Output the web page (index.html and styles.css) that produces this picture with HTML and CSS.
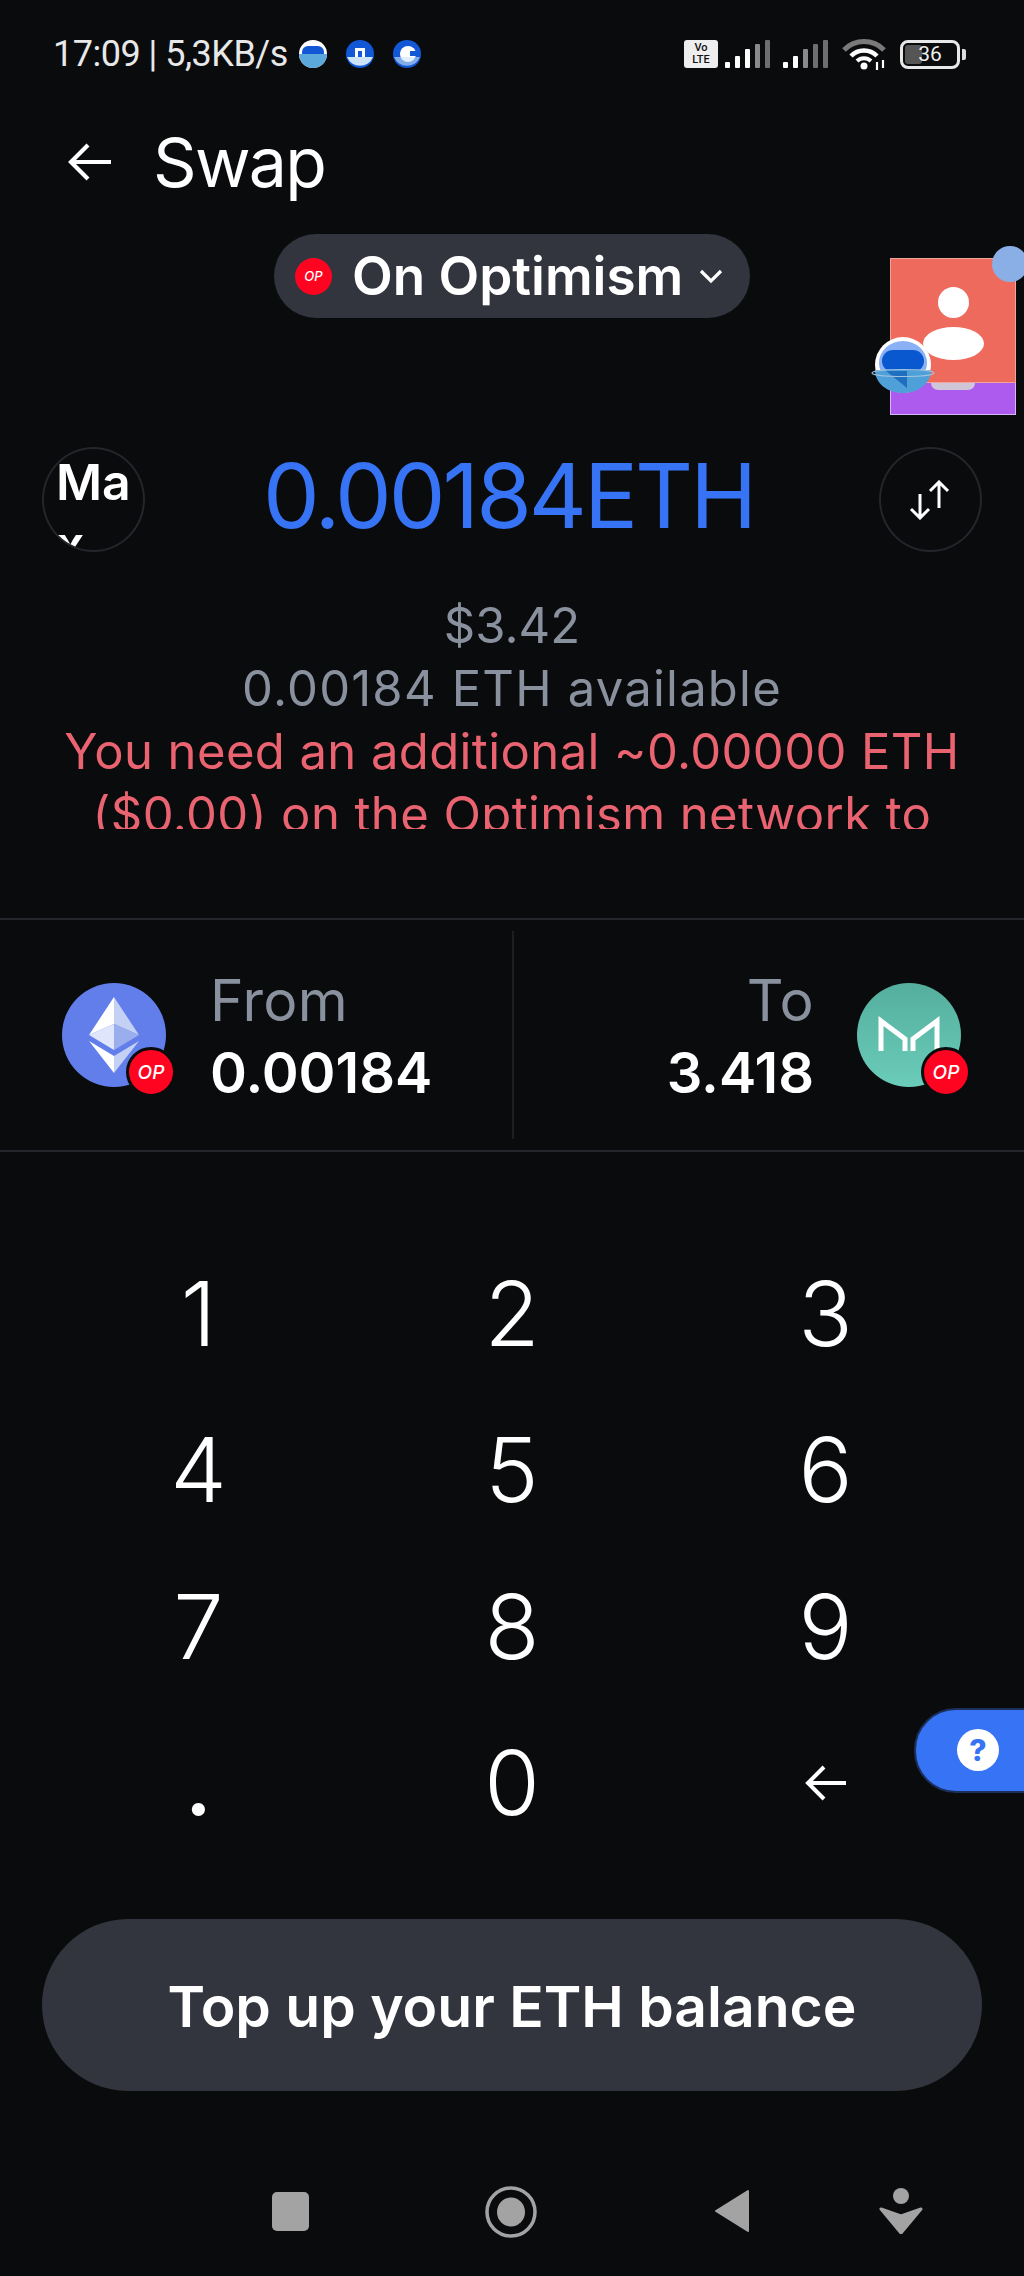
FILE: index.html
```html
<!DOCTYPE html>
<html lang="en">
<head>
<meta charset="utf-8">
<title>Swap</title>
<link rel="stylesheet" href="styles.css">
</head>
<body>
<div class="screen">
  <div class="status">
    <div class="status-left">
      <span class="status-text">17:09 | 5,3KB/s</span>
      <svg class="note" viewBox="0 0 28 28"><ellipse cx="14" cy="14" rx="14" ry="14" fill="#fff"/><rect x="3" y="6" width="22" height="13" rx="6" fill="#1257d6"/><path d="M0 14h28a14 14 0 0 1-28 0z" fill="#5aa8dc"/></svg>
      <svg class="note" viewBox="0 0 28 28"><ellipse cx="14" cy="14" rx="14" ry="14" fill="#1257d6"/><rect x="9" y="8" width="10" height="11" fill="#fff"/><rect x="12" y="11" width="4" height="6" fill="#1257d6"/><path d="M1 17h26a14 14 0 0 1-26 0z" fill="#cde4f7"/></svg>
      <svg class="note" viewBox="0 0 28 28"><ellipse cx="14" cy="14" rx="14" ry="14" fill="#1257d6"/><circle cx="15" cy="14" r="8" fill="#fff"/><rect x="17" y="11" width="9" height="5" fill="#1257d6"/><path d="M1 17h26a14 14 0 0 1-26 0z" fill="#cde4f7" opacity=".6"/></svg>
    </div>
    <div class="status-right">
      <div class="volte"><span>Vo</span><span>LTE</span></div>
      <svg class="signal" viewBox="0 0 46 28"><rect x="0" y="22" width="5" height="6" rx="1" fill="#fff"/><rect x="10" y="16" width="5" height="12" rx="1" fill="#fff"/><rect x="20" y="9" width="5" height="19" rx="1" fill="#fff"/><rect x="30" y="4" width="5" height="24" rx="1" fill="#8a8a8a"/><rect x="40" y="0" width="5" height="28" rx="1" fill="#6e6e6e"/></svg>
      <svg class="signal" viewBox="0 0 46 28"><rect x="0" y="22" width="5" height="6" rx="1" fill="#fff"/><rect x="10" y="16" width="5" height="12" rx="1" fill="#fff"/><rect x="20" y="9" width="5" height="19" rx="1" fill="#8a8a8a"/><rect x="30" y="4" width="5" height="24" rx="1" fill="#6e6e6e"/><rect x="40" y="0" width="5" height="28" rx="1" fill="#6e6e6e"/></svg>
      <svg class="wifi" viewBox="0 0 46 32"><path d="M3 12a28 28 0 0 1 40 0" fill="none" stroke="#7a7a7a" stroke-width="5"/><path d="M10 18a18 18 0 0 1 26 0" fill="none" stroke="#fff" stroke-width="4.5"/><path d="M16 23a10 10 0 0 1 14 0" fill="none" stroke="#fff" stroke-width="4"/><circle cx="23" cy="28" r="3.5" fill="#fff"/><path d="M36 24v8M42 22v8" stroke="#fff" stroke-width="2.2"/></svg>
      <div class="battery"><div class="battery-fill"></div><span class="battery-num">36</span></div>
      <div class="battery-tip"></div>
    </div>
  </div>

  <div class="header">
    <svg class="back" viewBox="0 0 44 38"><path d="M43 19H3M20 2 3 19l17 17" fill="none" stroke="#fff" stroke-width="4.2"/></svg>
    <h1 class="title">Swap</h1>
  </div>

  <div class="pill-row">
    <div class="pill">
      <span class="op op-pill">OP</span>
      <span class="pill-text">On Optimism</span>
      <svg class="chev" viewBox="0 0 24 16"><path d="M2 3l10 10L22 3" fill="none" stroke="#fff" stroke-width="3.2"/></svg>
    </div>
  </div>

  <div class="amount-row">
    <div class="round max"><span class="max-text">Max</span></div>
    <div class="amount">0.00184ETH</div>
    <div class="round">
      <svg class="flip" viewBox="0 0 42 40"><path d="M11 14v24M2 29l9 9 9-9M30 28V2M21 11l9-9 9 9" fill="none" stroke="#fff" stroke-width="3"/></svg>
    </div>
  </div>

  <div class="info">
    <div class="info-line muted">$3.42</div>
    <div class="info-line muted avail">0.00184 ETH available</div>
    <div class="info-line error">You need an additional ~0.00000 ETH</div>
    <div class="info-line error">($0.00) on the Optimism network to</div>
  </div>

  <div class="pair">
    <div class="side">
      <div class="coin eth">
        <svg class="coin-art" viewBox="0 0 104 104"><path d="M52 14 27 52l25-11z" fill="#fff"/><path d="M52 14l25 38-25-11z" fill="#c5d0f5"/><path d="M27 52l25-11v26z" fill="#dfe5fa"/><path d="M77 52 52 41v26z" fill="#9aaeee"/><path d="M27 58l25 15v17z" fill="#fff"/><path d="M77 58 52 73v17z" fill="#c5d0f5"/></svg>
        <span class="op op-badge">OP</span>
      </div>
      <div class="labels">
        <span class="label">From</span>
        <span class="value">0.00184</span>
      </div>
    </div>
    <div class="vline"></div>
    <div class="side side-to">
      <div class="labels labels-right">
        <span class="label">To</span>
        <span class="value">3.418</span>
      </div>
      <div class="coin mkr">
        <svg class="coin-art" viewBox="0 0 104 104"><path d="M24 68V38l24 18v12M80 68V38L56 56v12" fill="none" stroke="#fff" stroke-width="5"/></svg>
        <span class="op op-badge">OP</span>
      </div>
    </div>
  </div>

  <div class="keypad">
    <div class="key">1</div><div class="key">2</div><div class="key">3</div>
    <div class="key">4</div><div class="key">5</div><div class="key">6</div>
    <div class="key">7</div><div class="key">8</div><div class="key">9</div>
    <div class="key key-dot">.</div><div class="key">0</div>
    <div class="key"><svg class="bksp" viewBox="0 0 42 38"><path d="M41 19H3M19 3 3 19l16 16" fill="none" stroke="#fff" stroke-width="4"/></svg></div>
  </div>

  <div class="cta-row"><div class="cta">Top up your ETH balance</div></div>

  <div class="nav">
    <div class="nav-square"></div>
    <svg class="nav-home" viewBox="0 0 52 52"><ellipse cx="26" cy="26" rx="24" ry="24" fill="none" stroke="#a3a3a3" stroke-width="3.5"/><ellipse cx="26" cy="26" rx="14" ry="14.5" fill="#a3a3a3"/></svg>
    <svg class="nav-back" viewBox="0 0 36 44"><path d="M34 2v40L2 22z" fill="#a3a3a3" stroke="#a3a3a3" stroke-width="2" stroke-linejoin="round"/></svg>
    <svg class="nav-person" viewBox="0 0 44 46"><ellipse cx="22" cy="8" rx="8" ry="8" fill="#a3a3a3"/><path d="M2 21l20 7 20-7-20 24z" fill="#a3a3a3" stroke="#a3a3a3" stroke-width="3" stroke-linejoin="round"/></svg>
  </div>

  <div class="bubble">
    <div class="bubble-red">
      <div class="bubble-head"></div>
      <div class="bubble-body"></div>
    </div>
    <div class="bubble-purple"><div class="bubble-peek"></div></div>
  </div>
  <div class="bubble-dot"></div>
  <svg class="chat" viewBox="0 0 64 56"><ellipse cx="32" cy="28" rx="28" ry="28" fill="#fff"/><ellipse cx="32" cy="26" rx="24" ry="22" fill="#8ab0f5"/><rect x="11" y="13" width="42" height="22" rx="11" fill="#0a58d0"/><path d="M4 33h56c0 13-12 23-28 23S4 46 4 33z" fill="#4f9fd8"/><path d="M15 34l21 17V34z" fill="#1f6fc0"/><ellipse cx="32" cy="36" rx="31" ry="3.5" fill="none" stroke="#9fc4de" stroke-width="1.2"/></svg>

  <div class="help">
    <span class="help-mark">?</span>
  </div>
</div>
</body>
</html>
```
FILE: styles.css
```css
* { box-sizing: border-box; }
html, body { margin: 0; padding: 0; }
body { background: #0a0b0d; font-family: Inter, "Liberation Sans", sans-serif; color: #fff; }
.screen { position: relative; width: 1024px; height: 2276px; overflow: hidden; background: #0a0b0d; }

.status { height: 120px; padding: 38px 58px 0 53px; display: flex; justify-content: space-between; align-items: flex-start; }
.status-left { display: flex; align-items: center; height: 32px; }
.status-text { font-family: Roboto, sans-serif; font-size: 36px; color: #e8e8e8; width: 246px; letter-spacing: -0.5px; white-space: nowrap; }
.note { width: 28px; height: 28px; margin-right: 19px; }
.status-right { display: flex; align-items: center; height: 32px; }
.volte { width: 34px; height: 28px; background: #eee; border-radius: 3px; color: #111; font-family: Roboto, sans-serif; font-size: 11px; font-weight: 500; line-height: 12px; display: flex; flex-direction: column; align-items: center; justify-content: center; margin-right: 7px; }
.signal { width: 46px; height: 28px; margin-right: 12px; }
.wifi { width: 46px; height: 32px; margin-right: 13px; }
.battery { position: relative; width: 60px; height: 29px; border: 3px solid #e8e8e8; border-radius: 8px; display: flex; align-items: center; justify-content: center; }
.battery-fill { position: absolute; left: 2px; top: 2px; bottom: 2px; width: 17px; background: #555; border-radius: 3px; }
.battery-num { position: relative; font-family: Roboto, sans-serif; font-size: 21px; color: #eee; }
.battery-tip { width: 4px; height: 11px; background: #ddd; margin-left: 2px; border-radius: 0 2px 2px 0; }

.header { height: 84px; padding-left: 68px; display: flex; align-items: center; }
.back { width: 44px; height: 38px; margin-right: 41px; }
.title { margin: 0; font-size: 68px; font-weight: 400; letter-spacing: -1.75px; line-height: 84px; }

.pill-row { display: flex; padding-left: 274px; margin-top: 30px; }
.pill { width: 476px; height: 84px; border-radius: 42px; background: #32353d; display: flex; align-items: center; padding-left: 21px; }
.pill-text { font-size: 53px; font-weight: 600; margin-left: 20px; white-space: nowrap; letter-spacing: 0; }
.chev { width: 24px; height: 16px; margin-left: 16px; }

.op { display: flex; align-items: center; justify-content: center; background: #ff0420; border-radius: 50%; color: #fff; font-style: italic; font-weight: 500; }
.op-pill { width: 37px; height: 37px; font-size: 13px; flex: none; }

.amount-row { height: 105px; margin-top: 129px; padding: 0 42px; display: flex; align-items: center; justify-content: space-between; }
.round { position: relative; width: 103px; height: 105px; border-radius: 50%; border: 2px solid #24262b; display: flex; align-items: center; justify-content: center; flex: none; overflow: hidden; }
.max { align-items: flex-start; justify-content: flex-start; padding: 0 0 0 12px; }
.max-text { display: block; width: 78px; font-size: 50px; line-height: 62px; font-weight: 600; word-break: break-all; margin-top: 2px; }
.amount { height: 105px; margin-right: 7px; font-size: 90px; font-weight: 400; color: #3773f5; letter-spacing: -3px; line-height: 97px; white-space: nowrap; }
.flip { width: 42px; height: 40px; }

.info { margin-top: 42px; height: 235px; overflow: hidden; text-align: center; }
.info-line { font-size: 49px; line-height: 63px; white-space: nowrap; }
.muted { color: #8a919e; }
.avail { letter-spacing: 1.2px; }
.error { color: #ea6370; letter-spacing: 0.4px; }

.pair { margin-top: 89px; height: 234px; border-top: 2px solid #23262b; border-bottom: 2px solid #23262b; display: flex; align-items: center; }
.side { width: 512px; flex: none; height: 100%; display: flex; align-items: center; padding-left: 62px; }
.side-to { flex: 1; width: auto; justify-content: flex-end; padding: 0 63px 0 0; }
.vline { width: 2px; height: 208px; background: #1c1e23; flex: none; }
.coin { position: relative; width: 104px; height: 104px; border-radius: 50%; flex: none; }
.eth { background: #627eea; }
.mkr { background: linear-gradient(#55ae9e, #6accb9); }
.coin-art { width: 104px; height: 104px; display: block; }
.op-badge { position: absolute; left: 64px; top: 64px; width: 50px; height: 50px; border: 3px solid #0a0b0d; font-size: 19px; }
.labels { display: flex; flex-direction: column; margin-left: 44px; padding-top: 3px; }
.labels-right { align-items: flex-end; margin: 0 43px 0 0; }
.label { font-size: 57px; line-height: 66px; color: #8a919e; letter-spacing: 0.4px; }
.value { font-size: 56px; line-height: 66px; margin-top: 6px; font-weight: 600; }

.keypad { margin-top: 83px; padding: 0 42px; display: grid; grid-template-columns: repeat(3, 313.5px); grid-auto-rows: 156.5px; justify-content: center; }
.key { display: flex; align-items: center; justify-content: center; font-size: 90px; font-weight: 300; }
.key-dot { font-weight: 500; }
.bksp { width: 42px; height: 38px; }

.cta-row { margin-top: 58px; padding: 0 42px; }
.cta { height: 172px; padding-top: 3px; border-radius: 86px; background: #32353d; display: flex; align-items: center; justify-content: center; font-size: 57px; font-weight: 600; }

.nav { position: absolute; left: 0; right: 0; top: 2186px; height: 52px; }
.nav-square { position: absolute; left: 272px; top: 6px; width: 37px; height: 39px; background: #a3a3a3; border-radius: 5px; }
.nav-home { position: absolute; left: 485px; top: 0; width: 52px; height: 52px; }
.nav-back { position: absolute; left: 714px; top: 3px; width: 36px; height: 44px; }
.nav-person { position: absolute; left: 879px; top: 2px; width: 44px; height: 46px; }

.bubble { position: absolute; left: 890px; top: 258px; width: 126px; height: 157px; }
.bubble-red { position: relative; height: 125px; background: #ee6a5d; border: 1px solid #f1a49c; }
.bubble-head { position: absolute; left: 47px; top: 28px; width: 31px; height: 31px; border-radius: 50%; background: #fff; }
.bubble-body { position: absolute; left: 32px; top: 68px; width: 61px; height: 33px; border-radius: 50%; background: #fff; }
.bubble-purple { height: 32px; background: #ad5bef; border: 1px solid #d9b6f5; border-top: none; }
.bubble-peek { width: 44px; height: 7px; margin-left: 40px; background: #cfc6d8; border-radius: 0 0 22px 22px; }
.bubble-dot { position: absolute; left: 992px; top: 246px; width: 36px; height: 36px; border-radius: 50%; background: #8aaee6; }
.chat { position: absolute; left: 871px; top: 337px; width: 64px; height: 56px; }

.help { position: absolute; left: 914px; top: 1708px; width: 130px; height: 85px; background: #3773f5; border: 2px solid #1c2f5c; border-radius: 42px 0 0 42px; }
.help-mark { position: absolute; left: 41px; top: 19px; width: 42px; height: 42px; border-radius: 50%; background: #fff; color: #3773f5; font-size: 30px; font-weight: 800; line-height: 42px; text-align: center; }
```
